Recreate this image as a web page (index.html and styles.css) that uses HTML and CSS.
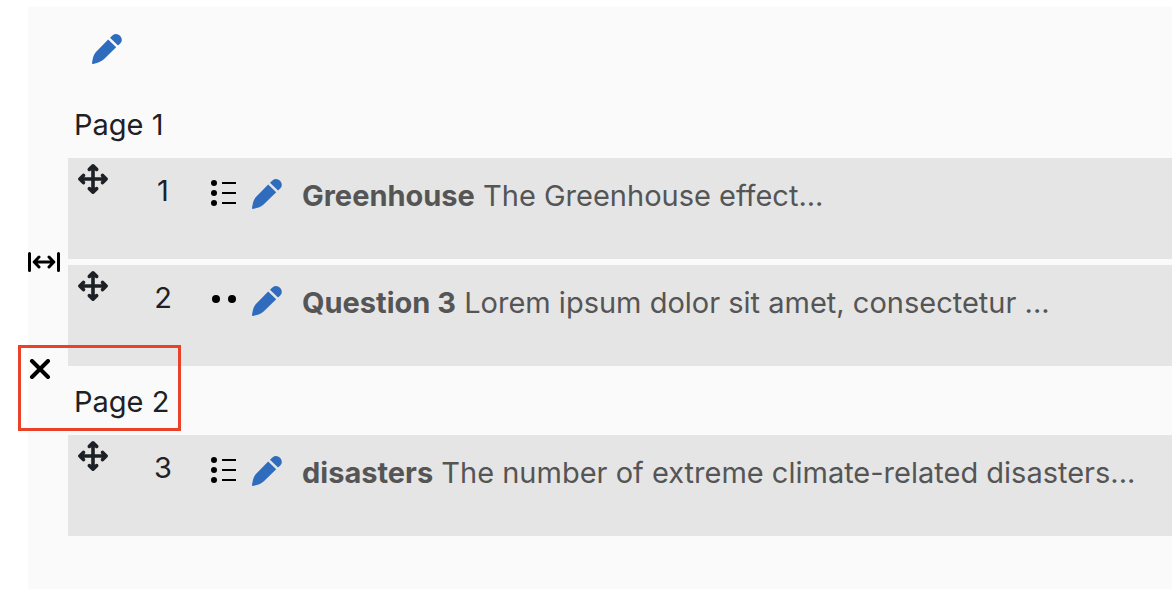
FILE: index.html
```
<!DOCTYPE html>
<html lang="en">
<head>
<meta charset="utf-8">
<title>Quiz questions</title>
<link rel="stylesheet" href="styles.css">
</head>
<body>
<svg class="symbols" aria-hidden="true">
  <symbol id="pencil" viewBox="0 0 30 30">
    <path d="M16.2 5.400 24.200 13.200 11.600 25.500C9 28 5 29 1.100 29.900Q-.2 30.100 0 28.700C.8 25 1 21.500 3.700 18.200Z"/>
    <path d="M18 3.800 20.400 1.500Q24.200-1.500 28.100 1.800 31.400 6 28.400 9.200L26 11.600Z"/>
  </symbol>
  <symbol id="move" viewBox="0 0 30 30">
    <path fill="currentColor" stroke="currentColor" stroke-width="3.6" stroke-linecap="round" stroke-linejoin="round" d="M15 2V28M2 15H28M11.400 5.400 15 1.900 18.600 5.400M11.400 24.600 15 28.100 18.600 24.600M5.400 11.400 1.900 15 5.400 18.600M24.600 11.400 28.100 15 24.600 18.600"/>
  </symbol>
  <symbol id="list" viewBox="0 0 26 30">
    <circle cx="3" cy="5" r="3"/><circle cx="3" cy="15" r="3"/><circle cx="3" cy="25" r="3"/>
    <path d="M11 4H25V6H11ZM11 14H25V16H11ZM11 24H25V26H11Z"/>
  </symbol>
  <symbol id="dots" viewBox="0 0 26 30">
    <circle cx="5" cy="14" r="4"/><circle cx="21" cy="14" r="4"/>
  </symbol>
</svg>

<main class="quiz">
  <header class="quiz-head">
    <a class="edit" href="#" aria-label="Edit section"><svg class="icon"><use href="#pencil"/></svg></a>
  </header>

  <h2 class="page-title">Page 1</h2>
  <article class="question">
    <button class="move" type="button" aria-label="Move question 1"><svg class="icon"><use href="#move"/></svg></button>
    <span class="number">1</span>
    <svg class="type" role="img" aria-label="Multiple choice"><use href="#list"/></svg>
    <a class="edit" href="#" aria-label="Edit Greenhouse"><svg class="icon"><use href="#pencil"/></svg></a>
    <a class="name" href="#"><strong>Greenhouse</strong> The Greenhouse effect...</a>
  </article>

  <div class="break">
    <button type="button" aria-label="Add page break">
      <svg class="split" viewBox="0 0 32 20"><path d="M1.5 1.5V18.5M30.5 1.5V18.5M6.5 10H25.5M11 5 6.2 10 11 15M21 5 25.8 10 21 15"/></svg>
    </button>
  </div>

  <article class="question">
    <button class="move" type="button" aria-label="Move question 2"><svg class="icon"><use href="#move"/></svg></button>
    <span class="number">2</span>
    <svg class="type" role="img" aria-label="Short answer"><use href="#dots"/></svg>
    <a class="edit" href="#" aria-label="Edit Question 3"><svg class="icon"><use href="#pencil"/></svg></a>
    <a class="name" href="#"><strong>Question 3</strong> Lorem ipsum dolor sit amet, consectetur ...</a>
  </article>

  <div class="joined">
    <div class="break">
      <button type="button" aria-label="Remove page break">
        <svg class="join" viewBox="0 0 24 20"><path d="M4 2 20 18M20 2 4 18"/></svg>
      </button>
    </div>
    <h2 class="page-title">Page 2</h2>
    <div class="highlight"></div>
  </div>

  <article class="question">
    <button class="move" type="button" aria-label="Move question 3"><svg class="icon"><use href="#move"/></svg></button>
    <span class="number">3</span>
    <svg class="type" role="img" aria-label="Multiple choice"><use href="#list"/></svg>
    <a class="edit" href="#" aria-label="Edit disasters"><svg class="icon"><use href="#pencil"/></svg></a>
    <a class="name" href="#"><strong>disasters</strong> The number of extreme climate-related disasters...</a>
  </article>
</main>
</body>
</html>
```
FILE: styles.css
```
* { box-sizing: border-box; }

body {
  margin: 0;
  background: #fff;
  color: #1d2125;
  font: 29px/44px Inter, "Liberation Sans", sans-serif;
}

button {
  display: flex;
  padding: 0;
  border: 0;
  background: none;
  color: inherit;
}

svg { display: block; flex: none; fill: currentColor; }

.symbols { position: absolute; width: 0; height: 0; }

.quiz {
  margin: 7px 0 1px 28px;
  padding: 0 0 53px 40px;
  background: #fafafa;
}

.quiz-head { padding: 27px 24px 31px; }

.icon { width: 30px; height: 30px; }

.edit { display: block; width: 30px; color: #306cbe; }

.page-title {
  margin: 0;
  padding: 8px 6px 11px;
  font-size: inherit;
  font-weight: 400;
}

.question {
  display: grid;
  grid-template-columns: 30px 70px 59px 45px 1fr;
  align-items: start;
  padding: 6px 0 41px 10px;
  background: #e5e5e5;
}

.question .edit { margin: 15px 0 0 15px; }

.number {
  padding: 5px 0 0 40px;
  text-align: center;
}

.type {
  width: 26px;
  height: 30px;
  margin: 14px 0 0 33px;
  color: #000;
}

.name {
  padding: 10px 0 0 20px;
  color: #555;
  text-decoration: none;
}

/* Page-break control, centred on the gap in the left gutter */
.break {
  display: flex;
  align-items: center;
  height: 6px;
  margin-left: -40px;
  color: #000;
}

.split { width: 32px; height: 20px; }
.join { width: 24px; height: 20px; }

.split, .join {
  fill: none;
  stroke: currentColor;
  stroke-width: 3;
  stroke-linecap: round;
  stroke-linejoin: round;
}

.join { stroke-width: 4; }

.joined { position: relative; }

.highlight {
  position: absolute;
  top: -21px;
  left: -50px;
  width: 163px;
  height: 86px;
  border: 3px solid #ea4228;
  pointer-events: none;
}
```
